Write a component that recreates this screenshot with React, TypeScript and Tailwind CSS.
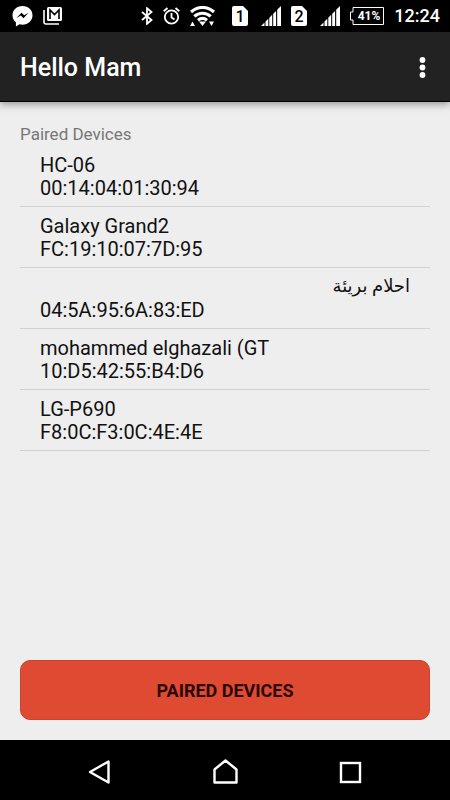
type Device = {
  name: string;
  address: string;
  rtl?: boolean;
};

const devices: Device[] = [
  { name: "HC-06", address: "00:14:04:01:30:94" },
  { name: "Galaxy Grand2", address: "FC:19:10:07:7D:95" },
  { name: "احلام بريئة", address: "04:5A:95:6A:83:ED", rtl: true },
  { name: "mohammed elghazali (GT", address: "10:D5:42:55:B4:D6" },
  { name: "LG-P690", address: "F8:0C:F3:0C:4E:4E" },
];

function SimCard({ slot }: { slot: number }) {
  return (
    <svg width="19" height="20" viewBox="0 0 19 20" fill="white">
      <path d="M2 0h9l5 5v13a2 2 0 0 1-2 2H2a2 2 0 0 1-2-2V2a2 2 0 0 1 2-2z" />
      <text x="8" y="16" textAnchor="middle" fill="black" fontSize="16" fontWeight="500">
        {slot}
      </text>
    </svg>
  );
}

function Signal() {
  return (
    <svg width="20" height="20" viewBox="0 0 20 20" fill="white">
      <path d="M0 20l3.500-3.500V20zM4.500 20v-4.500L7.300 12.700V20zM8.300 20v-8.300L11.200 8.800V20zM12.200 20V7.800L15.100 4.900V20zM16.200 20V3.800L20 0v20z" />
    </svg>
  );
}

function StatusBar() {
  return (
    <div className="flex h-8 items-center justify-between bg-black pr-[10px] pl-3 text-white">
      <div className="flex items-center gap-[10px]">
        <svg width="21" height="21" viewBox="0 0 21 21">
          <path
            d="M10.500 0C4.700 0 .5 4 .5 9.300c0 3 1.300 5.400 3.400 7V20.500l3.600-2.200c1 .3 2 .4 3 .4 5.800 0 10-4.100 10-9.400S16.300 0 10.500 0z"
            fill="white"
          />
          <path d="M4.500 12l5-5.300 2.700 2.600 4.300-2.500-5 5.400-2.700-2.700z" fill="black" />
        </svg>
        <svg width="19" height="18" viewBox="0 0 19 18">
          <path d="M1 3v12a2 2 0 0 0 2 2h13" fill="none" stroke="white" strokeWidth="1.600" />
          <rect x="4" y="0" width="15" height="14" rx="1.500" fill="white" />
          <path d="M7 12V3l4.500 4.500L16 3v9" fill="none" stroke="black" strokeWidth="1.600" />
        </svg>
      </div>

      <div className="flex items-center gap-[10px]">
        <svg width="12" height="18" viewBox="0 0 12 18" fill="none" stroke="white" strokeWidth="1.800">
          <path d="M1 5l9.500 8L6 16.800V1.200L10.500 5 1 13" />
        </svg>
        <svg width="17" height="18" viewBox="0 0 17 18" fill="none" stroke="white" strokeWidth="1.800">
          <circle cx="8.500" cy="10" r="6.700" />
          <path d="M8.500 6v4.500l3 2M.7 4.300L4.500 1M16.300 4.300L12.500 1" />
        </svg>
        <svg width="32" height="20" viewBox="0 0 32 20" fill="none" stroke="white" strokeWidth="3.200">
          <path d="M1 6C8 0 17 0 24 6M4.300 10.400c4.600-4.200 11.800-4.200 16.400 0M8 14.300c2.800-2.300 6.200-2.300 9 0" />
          <path d="M0 20l2.500-4.500L5 20zM9 15.500h7L12.500 20zM19 15.500h5L21.500 20z" fill="white" stroke="none" />
        </svg>
        <SimCard slot={1} />
        <Signal />
        <SimCard slot={2} />
        <Signal />
        <svg width="34" height="18" viewBox="0 0 34 18">
          <path d="M3 .5h30.500v17H3V13H.5V5H3z" fill="none" stroke="white" />
          <text x="19" y="13" textAnchor="middle" fill="white" fontSize="12" fontWeight="700">
            41%
          </text>
        </svg>
        <time className="text-lg leading-6 font-medium">12:24</time>
      </div>
    </div>
  );
}

function NavigationBar() {
  return (
    <nav className="flex h-[60px] items-center justify-center gap-[100px] bg-black pt-1">
      <button type="button" aria-label="Back">
        <svg width="25" height="26" viewBox="0 0 25 26" fill="none" stroke="white" strokeWidth="2.400">
          <path d="M2 13L20.500 2.500v21z" strokeLinejoin="round" />
        </svg>
      </button>
      <button type="button" aria-label="Home">
        <svg width="25" height="26" viewBox="0 0 25 26" fill="none" stroke="white" strokeWidth="2.400">
          <path d="M1.500 23.500V10.500L12.500 1.500 23.500 10.500V23.500z" strokeLinejoin="round" />
        </svg>
      </button>
      <button type="button" aria-label="Recent apps">
        <svg width="25" height="26" viewBox="0 0 25 26" fill="none" stroke="white" strokeWidth="2.400">
          <rect x="3" y="4" width="19" height="19" />
        </svg>
      </button>
    </nav>
  );
}

export default function App() {
  return (
    <div className="flex min-h-screen flex-col bg-[#eeeeee] font-[Roboto,'DejaVu_Sans',sans-serif] text-[#111111]">
      <StatusBar />

      <header className="flex h-[70px] items-center justify-between border-b border-black bg-[#222222] px-5 pt-0.5 text-white shadow-[0_2px_8px_rgba(0,0,0,0.4)]">
        <h1 className="text-[25px] leading-8 font-medium">Hello Mam</h1>
        <button type="button" aria-label="More options" className="px-1">
          <svg width="7" height="22" viewBox="0 0 7 22" fill="white">
            <circle cx="3.500" cy="3" r="2.900" />
            <circle cx="3.500" cy="10.500" r="2.900" />
            <circle cx="3.500" cy="18" r="2.900" />
          </svg>
        </button>
      </header>

      <main className="flex flex-1 flex-col px-5 pt-5 pb-5">
        <h2 className="text-[17px] leading-6 text-[#777777]">Paired Devices</h2>

        <ul>
          {devices.map((device) => (
            <li
              key={device.address}
              className="border-b border-[#d2d2d2] px-5 pt-2 pb-1.5 text-xl leading-[23px]"
            >
              {device.rtl ? (
                <p dir="rtl" className="mb-1 text-lg leading-[19px]">{device.name}</p>
              ) : (
                <p>{device.name}</p>
              )}
              <p>{device.address}</p>
            </li>
          ))}
        </ul>

        <button
          type="button"
          className="mt-auto h-[60px] rounded-[10px] border border-[#c9432e] bg-[#df4a32] pt-0.5 text-lg font-bold text-[#2a0806]"
        >
          PAIRED DEVICES
        </button>
      </main>

      <NavigationBar />
    </div>
  );
}
